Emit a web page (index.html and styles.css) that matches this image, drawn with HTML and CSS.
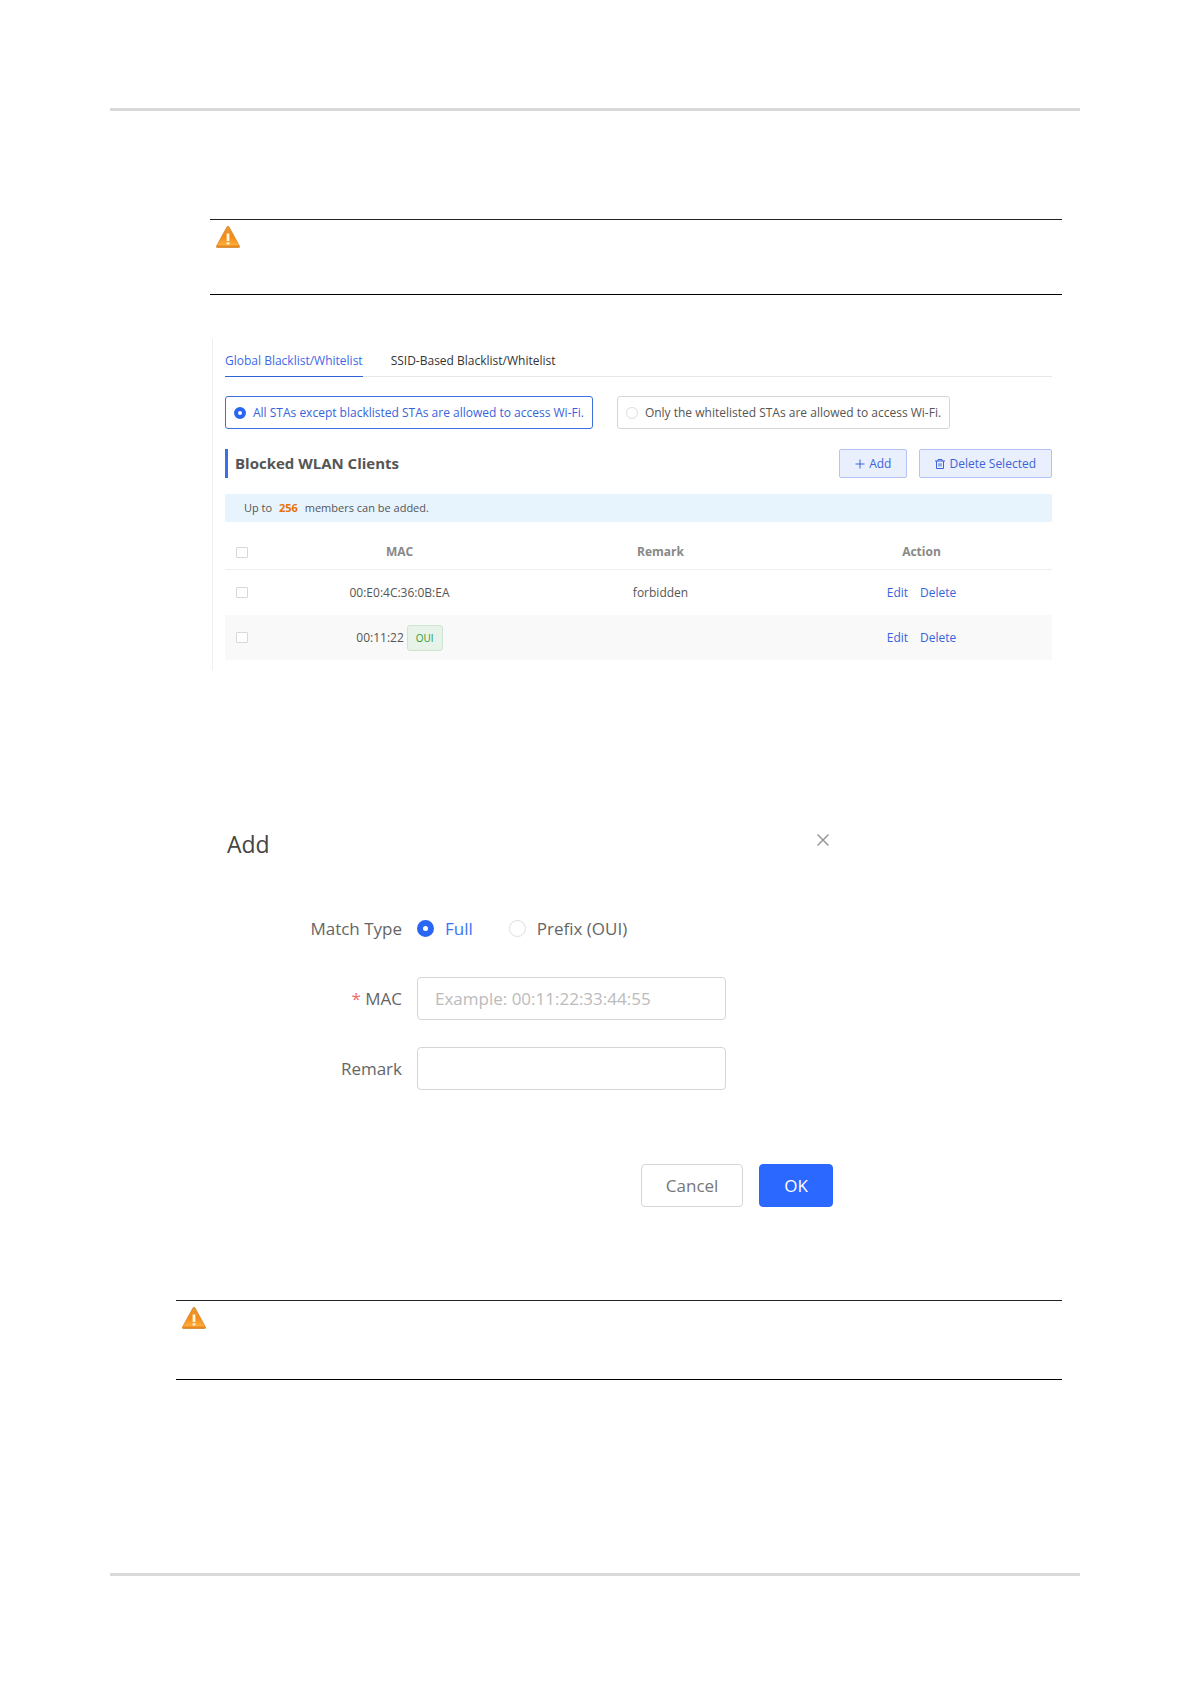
FILE: index.html
```html
<!DOCTYPE html>
<html lang="en">
<head>
<meta charset="utf-8">
<title>Blacklist/Whitelist</title>
<link rel="stylesheet" href="styles.css">
</head>
<body>
<svg class="defs" aria-hidden="true">
  <defs>
    <linearGradient id="amber" x1="0" y1="0" x2="0" y2="1">
      <stop offset="0" stop-color="#e99a3c"/>
      <stop offset="0.5" stop-color="#f58a12"/>
      <stop offset="0.85" stop-color="#fdab3a"/>
      <stop offset="1" stop-color="#e07a10"/>
    </linearGradient>
    <symbol id="warning" viewBox="0 0 24 22">
      <path d="M11 .8Q12 -.2 13 .8L23.600 20.300Q24 21.500 22.800 21.500H1.200Q0 21.500 .4 20.300Z" fill="url(#amber)" stroke="#c9771c" stroke-width=".6"/>
      <path d="M10.600 7.500h2.800v7.500h-2.800zM10.600 16.200h2.800v2.300h-2.800z" fill="#fff6e0"/>
    </symbol>
  </defs>
</svg>
<div class="page">
  <main class="content">
    <aside class="note note-inset"><svg class="warning" role="img" aria-label="Caution"><use href="#warning"/></svg></aside>

    <section class="panel">
      <nav class="tabs">
        <a class="tab active" href="#global">Global Blacklist/Whitelist</a>
        <a class="tab" href="#ssid">SSID-Based Blacklist/Whitelist</a>
      </nav>
      <div class="modes">
        <label class="mode selected"><input class="radio" type="radio" name="mode" checked>All STAs except blacklisted STAs are allowed to access Wi-Fi.</label>
        <label class="mode"><input class="radio" type="radio" name="mode">Only the whitelisted STAs are allowed to access Wi-Fi.</label>
      </div>
      <div class="toolbar">
        <h2 class="heading">Blocked WLAN Clients</h2>
        <button class="tool" type="button">
          <svg class="glyph" viewBox="0 0 10 10"><path d="M5 .5v9M.5 5h9"/></svg>Add</button>
        <button class="tool" type="button">
          <svg class="glyph" viewBox="0 0 10 10"><path d="M0 2h10M3 2V.5h4V2M1.5 2v7.5h7V2M4 4.200v3.300M6 4.200v3.300"/></svg>Delete Selected</button>
      </div>
      <p class="limit">Up to <strong>256</strong> members can be added.</p>
      <table class="clients">
        <colgroup><col class="pick"><col><col><col></colgroup>
        <thead>
          <tr><th><input class="check" type="checkbox" aria-label="Select all"></th><th>MAC</th><th>Remark</th><th>Action</th></tr>
        </thead>
        <tbody>
          <tr><td><input class="check" type="checkbox" aria-label="Select 00:E0:4C:36:0B:EA"></td><td>00:E0:4C:36:0B:EA</td><td>forbidden</td><td><span class="actions"><a href="#edit">Edit</a><a href="#delete">Delete</a></span></td></tr>
          <tr><td><input class="check" type="checkbox" aria-label="Select 00:11:22"></td><td><span class="mac">00:11:22<span class="badge">OUI</span></span></td><td></td><td><span class="actions"><a href="#edit">Edit</a><a href="#delete">Delete</a></span></td></tr>
        </tbody>
      </table>
    </section>

    <form class="dialog">
      <header class="dialog-head">
        <h2 class="dialog-title">Add</h2>
        <button class="close" type="button" aria-label="Close"><svg viewBox="0 0 14 14"><path d="M1.500 1.500l11 11M12.500 1.500l-11 11"/></svg></button>
      </header>
      <div class="fields">
        <span class="label" id="match">Match Type</span>
        <div class="choices" role="radiogroup" aria-labelledby="match">
          <label class="choice selected"><input class="radio" type="radio" name="match" checked>Full</label>
          <label class="choice"><input class="radio" type="radio" name="match">Prefix (OUI)</label>
        </div>
        <label class="label" for="mac"><span class="required">*</span> MAC</label>
        <input class="text" id="mac" type="text" placeholder="Example: 00:11:22:33:44:55">
        <label class="label" for="remark">Remark</label>
        <input class="text" id="remark" type="text">
      </div>
      <footer class="buttons">
        <button class="button" type="button">Cancel</button>
        <button class="button primary" type="button">OK</button>
      </footer>
    </form>

    <aside class="note"><svg class="warning" role="img" aria-label="Caution"><use href="#warning"/></svg></aside>
  </main>
</div>
</body>
</html>
```

FILE: styles.css
```css
* { box-sizing: border-box; }

body {
  margin: 0;
  background: #fff;
  color: #555;
  font: 12px/18px "Open Sans", "Noto Sans", sans-serif;
}

.defs { position: absolute; width: 0; height: 0; }

.page {
  margin: 108px 111px 108px 110px;
  border-top: 3px solid #d9d9d9;
  border-bottom: 3px solid #d9d9d9;
}

.content { padding: 108px 18px 193px 66px; }

/* Ruled caution notes */
.note {
  min-height: 80px;
  padding: 6px 6px;
  border-top: 1px solid #222;
  border-bottom: 1px solid #000;
}
.note-inset { min-height: 76px; margin-left: 34px; }
.warning { display: block; width: 24px; height: 22px; }

/* Client list */
.panel {
  margin: 44px 10px 0 36px;
  padding: 8px 0 10px 12px;
  border-left: 1px solid #eee;
}
.tabs { display: flex; gap: 28px; border-bottom: 1px solid #e8e8e8; }
.tab {
  margin-bottom: -1px;
  padding: 5px 0 6px;
  color: #333;
  text-decoration: none;
}
.tab.active { color: #3d68e8; border-bottom: 1px solid #2f62d9; }

.modes { display: flex; gap: 24px; margin-top: 19px; }
.mode {
  display: flex;
  align-items: center;
  gap: 7px;
  height: 33px;
  padding: 0 8px;
  border: 1px solid #d5d5d5;
  border-radius: 3px;
}
.mode.selected { color: #3763dc; border-color: #3b6fe0; }

.radio {
  appearance: none;
  flex: none;
  width: 12px;
  height: 12px;
  margin: 0;
  border: 1px solid #ddd;
  border-radius: 50%;
  background: #fff;
}
.radio:checked { border: 4px solid #2a66f4; }

.toolbar { display: flex; gap: 12px; margin-top: 20px; }
.heading {
  flex: 1;
  margin: 0;
  padding-left: 7px;
  border-left: 3px solid #3a6fe6;
  font-size: 15px;
  line-height: 29px;
}
.tool {
  display: flex;
  align-items: center;
  gap: 4px;
  height: 29px;
  padding: 0 15px;
  border: 1px solid #b3c3f5;
  border-radius: 2px;
  background: #e9effd;
  color: #3d63d8;
  font: inherit;
}
.glyph { width: 10px; height: 10px; fill: none; stroke: currentColor; stroke-width: 1; }

.limit {
  margin: 16px 0 0;
  padding: 5px 19px;
  border-radius: 2px;
  background: #e7f4fe;
  font-size: 11px;
}
.limit strong { margin: 0 4px; color: #e8710a; }

.clients {
  width: 100%;
  margin-top: 13px;
  border-collapse: separate;
  border-spacing: 0;
  table-layout: fixed;
  text-align: center;
}
.pick { width: 44px; }
.clients th, .clients td { height: 45px; padding: 0; }
.clients th { height: 35px; border-bottom: 1px solid #eee; color: #888; }
.clients th:first-child, .clients td:first-child { padding-left: 11px; text-align: left; }
.clients tbody tr:nth-child(even) { background: #f9f9f9; }
.check {
  appearance: none;
  display: block;
  width: 12px;
  height: 11px;
  margin: 0;
  border: 1px solid #d8d8d8;
  border-radius: 1px;
  background: #fff;
}
.actions, .mac { display: flex; justify-content: center; align-items: center; gap: 12px; }
.actions a { color: #3763dc; text-decoration: none; }
.mac { gap: 3px; }
.badge {
  padding: 3px 8px;
  border: 1px solid #cfe5d1;
  border-radius: 3px;
  background: #e7f3e8;
  color: #2f9a35;
  font-size: 10px;
}

/* Add dialog */
.dialog { width: 606px; margin: 158px 0 93px 51px; font-size: 17px; line-height: 24px; color: #666; }
.dialog-head { display: flex; justify-content: space-between; align-items: flex-start; }
.dialog-title { margin: 0; color: #444; font-size: 23px; font-weight: 400; line-height: 32px; }
.close { margin: 5px 3px 0; padding: 0; border: 0; background: none; }
.close svg { display: block; width: 14px; height: 14px; fill: none; stroke: #999; stroke-width: 1.5; }
.fields {
  display: grid;
  grid-template-columns: 175px 309px;
  column-gap: 15px;
  row-gap: 27px;
  align-items: center;
  margin-top: 47px;
}
.label { text-align: right; }
.required { color: #f56c6c; }
.choices { display: flex; gap: 36px; height: 43px; }
.choice { display: flex; align-items: center; gap: 11px; }
.choice.selected { color: #3a74f6; }
.choice .radio { width: 17px; height: 17px; }
.choice .radio:checked { border-width: 6px; }
.text {
  height: 43px;
  padding: 0 17px;
  border: 1px solid #d5d5d5;
  border-radius: 4px;
  background: #fff;
  font: inherit;
}
.text::placeholder { color: #bbb; }
.buttons { display: flex; justify-content: flex-end; gap: 16px; margin-top: 74px; }
.button {
  height: 43px;
  padding: 0 24px;
  border: 1px solid #d5d5d5;
  border-radius: 4px;
  background: #fff;
  color: #777;
  font: inherit;
}
.button.primary { border-color: #2a68ff; background: #2a68ff; color: #fff; }
```
